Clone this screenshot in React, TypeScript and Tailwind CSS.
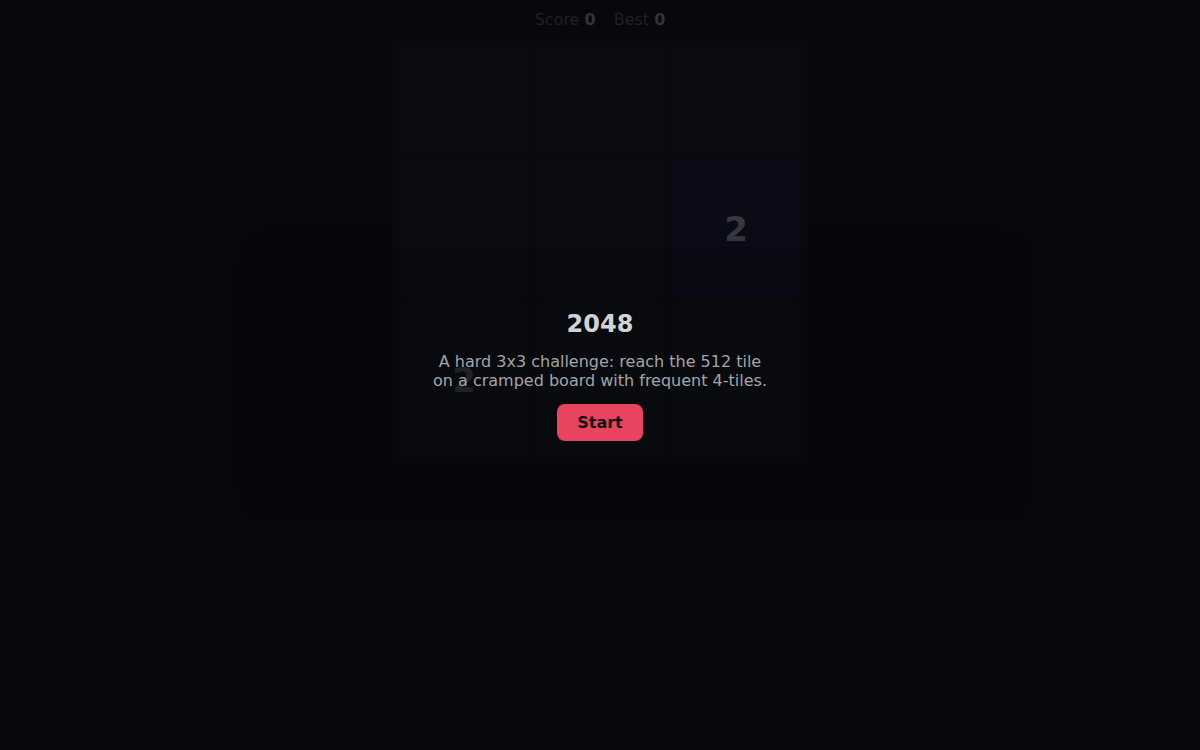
import React from 'react';

type Cell = number | null;

const board: Cell[][] = [
  [null, null, null],
  [null, null, 2],
  [2, null, null],
];

export default function App() {
  return (
    <div
      className="relative w-full h-[750px] bg-[#07080b] overflow-hidden text-left"
      style={{ fontFamily: '"DejaVu Sans", "Liberation Sans", sans-serif' }}
    >
      {/* Score header */}
      <div className="h-10 flex items-center justify-center gap-[18px] text-[16px] text-[#1f2025]">
        <span>
          Score <b className="text-[#333439]">0</b>
        </span>
        <span>
          Best <b className="text-[#333439]">0</b>
        </span>
      </div>

      {/* Board (dimmed behind the start overlay) */}
      <div className="mx-auto w-[416px] p-2 bg-[#0a0b0f] rounded-md grid grid-cols-3 grid-rows-[104px_138px_148px] gap-2">
        {board.flat().map((v, i) => (
          <div
            key={i}
            className={`rounded-sm flex items-center justify-center ${
              i === 5 ? 'bg-[#0b0c18]' : 'bg-[#0c0d11]'
            }`}
          >
            {v && <span className="text-[34px] font-bold text-[#38393d]">{v}</span>}
          </div>
        ))}
      </div>

      {/* Start overlay */}
      <div className="absolute inset-0 flex items-center justify-center">
        <div className="w-[760px] h-[256px] ml-[70px] rounded-xl bg-[#05060a]/45 shadow-[0_0_24px_rgba(0,0,0,0.15)] flex flex-col items-center justify-center text-center">
          <div className="-ml-[70px] flex flex-col items-center">
            <h1 className="text-[24px] leading-[30px] font-bold text-[#d2d3d6]">2048</h1>
            <p className="mt-[13px] max-w-[340px] text-[16px] leading-[19px] text-[#a3a4a8]">
              A hard 3x3 challenge: reach the 512 tile on a cramped board with frequent 4-tiles.
            </p>
            <button className="mt-[14px] h-[37px] px-5 rounded-lg bg-[#e8445f] text-[16px] font-bold text-[#111114]">
              Start
            </button>
          </div>
        </div>
      </div>
    </div>
  );
}
